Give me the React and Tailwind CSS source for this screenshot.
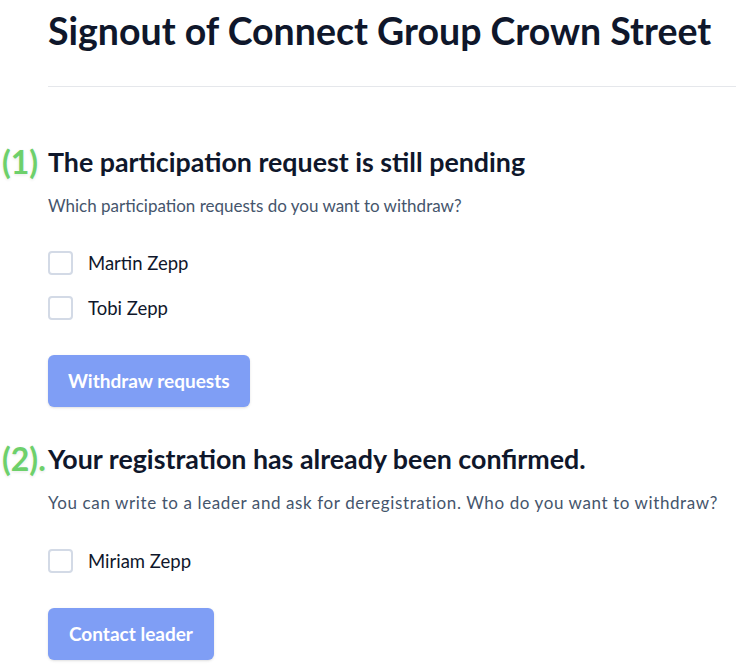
import React from "react";

function Checkbox({ label }) {
  return (
    <label className="flex items-center gap-[15px] h-[24px]">
      <span className="w-[25px] h-[24px] rounded-[4px] border-2 border-[#d3dae6] bg-white shrink-0" />
      <span className="text-[18.5px] leading-[24px] text-slate-900">{label}</span>
    </label>
  );
}

function Annotation({ children }) {
  return (
    <span className="absolute left-[-46px] top-[-3px] text-[32px] leading-[38px] font-bold text-[#6dd06b] [text-shadow:0_0_3px_rgba(255,255,255,0.9),0_1px_3px_rgba(0,0,0,0.12)]">
      {children}
    </span>
  );
}

export default function App() {
  return (
    <div className="min-h-[672px] bg-white" style={{ fontFamily: "Lato, 'Open Sans', sans-serif" }}>
      <div className="ml-12">
        <div className="pt-[9px] pb-[33px] border-b border-gray-200">
          <h1 className="text-[37.5px] leading-[44px] font-bold text-slate-900">
            Signout of Connect Group Crown Street
          </h1>
        </div>

        <section className="pt-[59px]">
          <div className="relative">
            <Annotation>(1)</Annotation>
            <h2 className="text-[26.8px] leading-[32px] font-bold text-slate-900">
              The participation request is still pending
            </h2>
          </div>
          <p className="mt-4 text-[17px] leading-[24px] text-slate-600">
            Which participation requests do you want to withdraw?
          </p>
          <div className="mt-[33px] flex flex-col gap-[21px]">
            <Checkbox label="Martin Zepp" />
            <Checkbox label="Tobi Zepp" />
          </div>
          <button className="mt-[35px] px-5 py-3 rounded-md bg-[#7f9ef5] text-white text-[19px] leading-[28px] font-bold shadow-sm">
            Withdraw requests
          </button>
        </section>

        <section className="pt-[36px]">
          <div className="relative">
            <Annotation>(2).</Annotation>
            <h2 className="text-[26.8px] leading-[32px] font-bold text-slate-900">
              Your registration has already been confirmed.
            </h2>
          </div>
          <p className="mt-4 text-[17px] leading-[24px] tracking-[0.6px] text-slate-600 whitespace-nowrap">
            You can write to a leader and ask for deregistration. Who do you want to withdraw?
          </p>
          <div className="mt-[34px] flex flex-col gap-[21px]">
            <Checkbox label="Miriam Zepp" />
          </div>
          <button className="mt-[35px] px-[21px] py-3 rounded-md bg-[#7f9ef5] text-white text-[19px] leading-[28px] font-bold shadow-sm">
            Contact leader
          </button>
        </section>
      </div>
    </div>
  );
}
